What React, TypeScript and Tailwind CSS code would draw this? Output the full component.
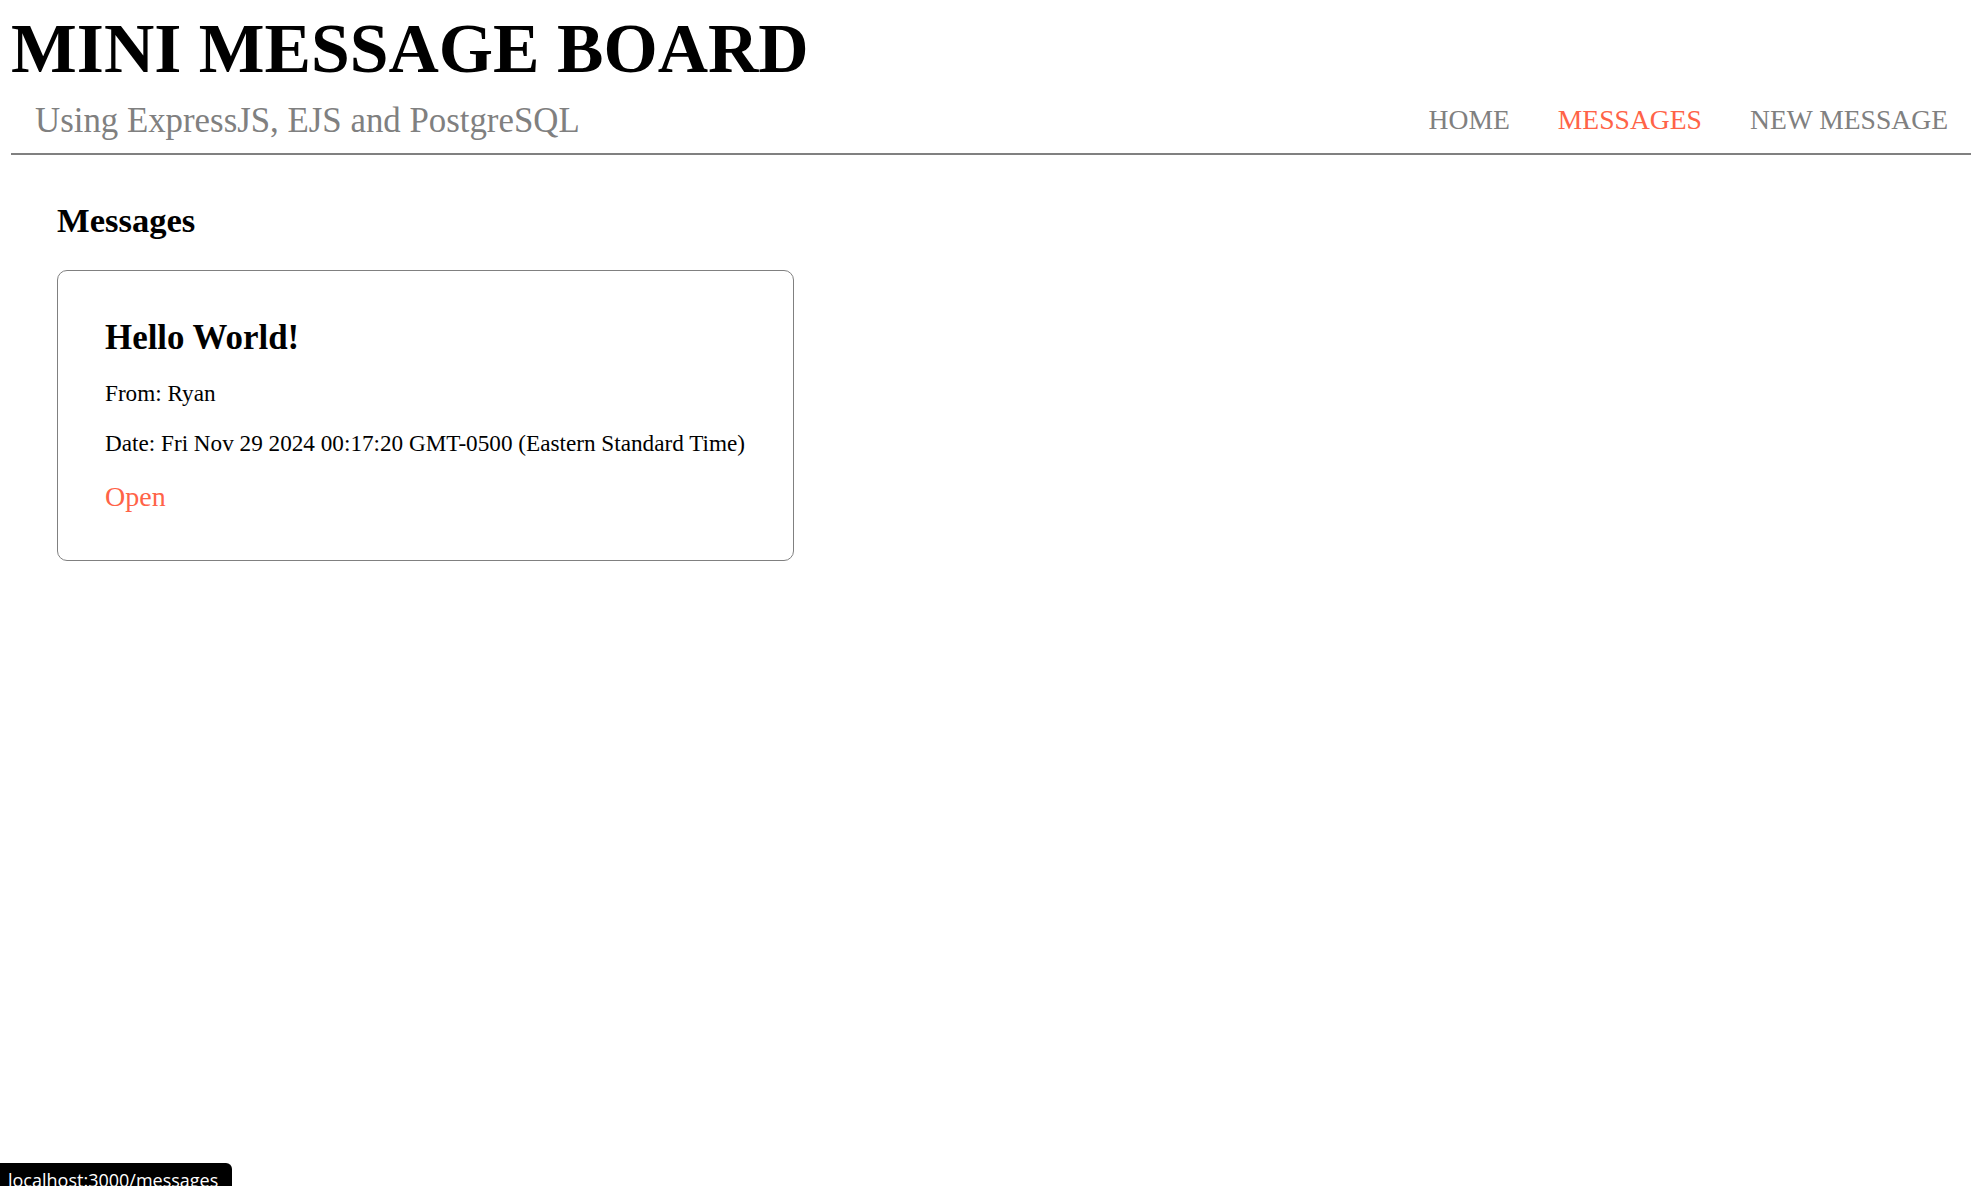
const NAV = [
  { label: 'HOME', active: false },
  { label: 'MESSAGES', active: true },
  { label: 'NEW MESSAGE', active: false },
]

const MESSAGES = [
  {
    id: 1,
    text: 'Hello World!',
    user: 'Ryan',
    added: 'Fri Nov 29 2024 00:17:20 GMT-0500 (Eastern Standard Time)',
  },
]

export default function App() {
  return (
    <div className="min-h-screen bg-white text-black font-['Liberation_Serif','Times_New_Roman',serif]">
      <header className="pl-[11px] pr-[9px] pt-[9px]">
        <h1 className="text-[69.7px] leading-[80px] font-bold">MINI MESSAGE BOARD</h1>
        <div className="flex items-start justify-between border-b-2 border-[#808080] pb-[12px]">
          <p className="mt-[12px] pl-[24px] text-[34.85px] leading-[40px] text-[#808080]">
            Using ExpressJS, EJS and PostgreSQL
          </p>
          <nav className="mt-[14px] pr-[23px] flex gap-[48px] text-[27.6px] leading-[34px]">
            {NAV.map(item => (
              <a
                key={item.label}
                href="#"
                className={item.active ? 'text-[#ff6347]' : 'text-[#808080] hover:text-[#ff6347]'}
              >
                {item.label}
              </a>
            ))}
          </nav>
        </div>
      </header>

      <main className="pl-[57px] pt-[45px]">
        <h2 className="text-[34.6px] leading-[40px] font-bold">Messages</h2>

        {MESSAGES.map(msg => (
          <div
            key={msg.id}
            className="mt-[30px] w-[737px] border border-[#808080] rounded-[10px] px-[47px] pt-[47px] pb-[46px]"
          >
            <h3 className="text-[34.9px] leading-[40px] font-bold">{msg.text}</h3>
            <p className="mt-[21px] text-[23.2px] leading-[28px]">From: {msg.user}</p>
            <p className="mt-[22px] text-[23.2px] leading-[28px] whitespace-nowrap">Date: {msg.added}</p>
            <a href="#" className="block mt-[23px] text-[28px] leading-[34px] text-[#ff6347]">
              Open
            </a>
          </div>
        ))}
      </main>

      {/* browser status bubble */}
      <div className="fixed left-0 top-[1163px] h-[40px] w-[232px] bg-black rounded-tr-[6px] pl-[8px] pt-[5px] text-white text-[18px] leading-[24px] font-['Open_Sans',sans-serif] overflow-hidden">
        localhost:3000/messages
      </div>
    </div>
  )
}
